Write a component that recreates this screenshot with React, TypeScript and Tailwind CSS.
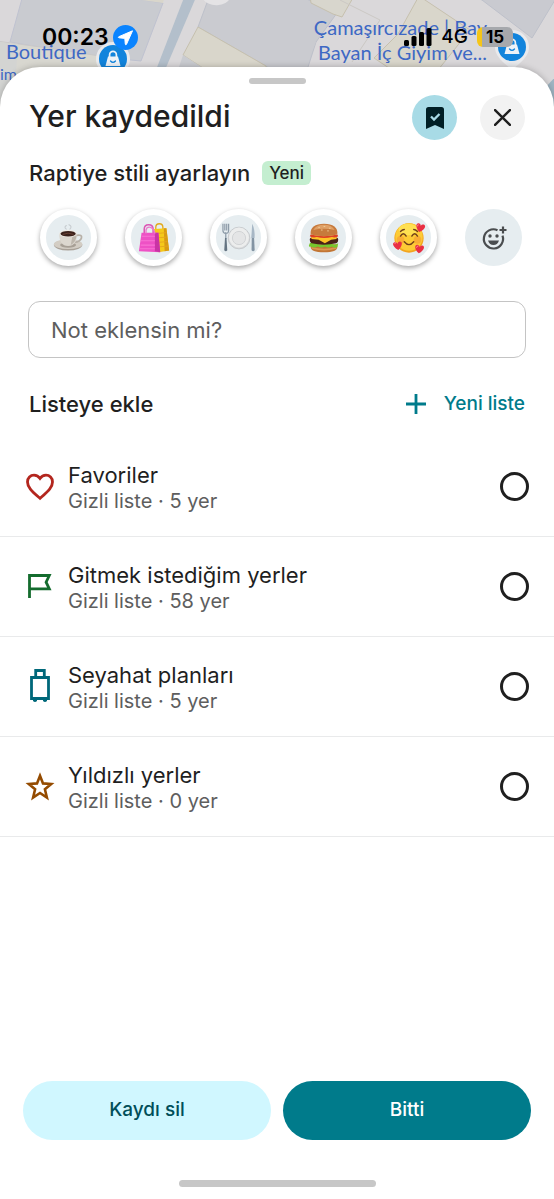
import { useState, type ReactNode } from "react";

const ui = "font-['Inter','Liberation_Sans',sans-serif]";

function BagPin({ cx, cy }: { cx: number; cy: number }) {
  return (
    <g transform={`translate(${cx} ${cy})`}>
      <path d="M-17 0a17 17 0 1 1 34 0c0 7-4 11-9 16l-8 7-8-7c-5-5-9-9-9-16z" fill="#e9eaed" />
      <circle r="14" fill="#1284dc" />
      <path d="M-5-2.500H5L7.500 7h-15z" fill="#eef2f7" />
      <path d="M-3.400-2v-2.300a3.400 3.400 0 0 1 6.800 0V-2" fill="none" stroke="#eef2f7" strokeWidth="1.700" />
      <path d="M-2.500 2q2.500 2.600 5 0" fill="none" stroke="#1284dc" strokeWidth="1.300" strokeLinecap="round" />
    </g>
  );
}

function MapBackdrop() {
  return (
    <div className="absolute inset-x-0 top-0 h-32 overflow-hidden bg-[#dad8da]">
      <svg className="h-full w-full" viewBox="0 0 554 128" preserveAspectRatio="xMidYMin slice" aria-hidden="true">
        <path d="M23-5H112L163 3 141 61 90 56 10 42z" fill="#c9cbd0" stroke="#bfc2d0" />
        <path d="M-4 41 48 48 100 56 98 80-4 128z" fill="#d8d7d0" stroke="#c9c8c8" />
        <path d="M0 42 18 44 14 100-4 106z" fill="#d3d4d2" />
        <path d="M112-4 163 3 165-5z" fill="#d9d6cb" />
        <path d="M185-5h12L165 70h-9z" fill="#b3bfcb" />
        <path d="M208 0 300-4 337 13 316 42 300 92 266 66 198 27z" fill="#cacbd0" stroke="#bdc0ca" />
        <path d="M198 27 266 66v4h-60L183 55z" fill="#d9d6cb" stroke="#c6c0ae" />
        <path d="M183 55 206 70H178z" fill="#c9cbd0" />
        <path d="M310-4h44l-12 21-9-3-22-11z" fill="#d8d6cd" stroke="#c6c0ae" />
        <path d="M274 10 316 42 304 70H274z" fill="#cacbd0" />
        <path d="M419-4 470 30 438 70H392l-18-12 24-24z" fill="#d9d6cb" stroke="#c6c0ae" />
        <path d="M470-5H558L532 38 482 0z" fill="#c9cad0" stroke="#bdc0ca" />
        <path d="M340 0 380 20 352 62" fill="none" stroke="#cbc8c4" />
        <path d="M558 74 532 102 554 126z" fill="#9fb5c3" />
        <path d="M202-4h28v2a14 9 0 0 1-27 1z" fill="#e4e3e5" />
        <BagPin cx={113} cy={59} />
        <BagPin cx={512} cy={47} />
      </svg>
      <div className="absolute left-[6px] top-[39px] font-['Lato','Inter',sans-serif] text-xl leading-6 text-[#3e68c4]">Boutique</div>
      <div className="absolute left-0 top-16 font-['Lato','Inter',sans-serif] text-base leading-5 text-[#3e68c4]">im</div>
      <div className="absolute right-[67px] top-[15px] text-right font-['Lato','Inter',sans-serif] text-xl leading-[25px] text-[#3e68c4]">
        Çamaşırcızade | Bay
        <br />
        Bayan İç Giyim ve...
      </div>
    </div>
  );
}

function StatusBar() {
  return (
    <div className="relative flex h-[67px] items-center pl-[42px] pr-[41px] pt-[7px] text-black">
      <span className="text-[23px] font-semibold leading-6">00:23</span>
      <svg className="ml-1 size-[25px]" viewBox="0 0 25 25" aria-hidden="true">
        <circle cx="12.500" cy="12.500" r="12.500" fill="#0a84ff" />
        <path d="M19.500 5.800 5.800 11.700q-1.100.7.300 1.100l5.700.6.500 5.800q.5 1.300 1.200.1z" fill="#fff" stroke="#fff" strokeLinejoin="round" />
      </svg>
      <svg className="ml-auto h-[18px] w-[28px]" viewBox="0 0 28 18" aria-hidden="true">
        <rect x="0" y="12" width="5" height="6" rx="1.500" />
        <rect x="7.500" y="8" width="5" height="10" rx="1.500" />
        <rect x="15" y="4" width="5" height="14" rx="1.500" />
        <rect x="22.500" y="0" width="5" height="18" rx="1.500" />
      </svg>
      <span className="ml-[9px] text-[19px] font-medium leading-6">4G</span>
      <span className="ml-[9px] flex h-5 w-9 items-center justify-center rounded-md bg-linear-to-r from-[#f5c518] from-15% to-[#a6a8ac] to-15% text-[17px] font-bold leading-5">
        15
      </span>
    </div>
  );
}

function Coffee() {
  return (
    <svg className="size-8" viewBox="0 0 36 36" aria-hidden="true">
      <path d="M15 8q-3-2 0-4M19 8q3-3-1-5" fill="none" stroke="#c7ccd0" strokeWidth="1.200" strokeLinecap="round" />
      <ellipse cx="17" cy="26" rx="16" ry="6" fill="#a9a198" />
      <ellipse cx="17" cy="25" rx="16" ry="5.500" fill="#d3cdc4" />
      <ellipse cx="17" cy="26" rx="9" ry="3" fill="#a79f95" />
      <path d="M27 15q6-1 5 3t-8 5" fill="none" stroke="#b7b0a7" strokeWidth="2" />
      <path d="M7 13c0 9 3 14 10 14s10-5 10-14z" fill="#dcd7cf" />
      <path d="M20 26c5-3 6-7 7-13l-5 2z" fill="#bdb6ac" />
      <ellipse cx="17" cy="13" rx="10" ry="4.200" fill="#eeeae4" />
      <ellipse cx="17" cy="13.200" rx="8.600" ry="3.100" fill="#3b211b" />
      <path d="M11 14q6-3 12 0" fill="none" stroke="#6d4436" />
    </svg>
  );
}

function Bags() {
  return (
    <svg className="size-8" viewBox="0 0 36 36" aria-hidden="true">
      <path d="M20 9V6q0-4 4-4t4 4v4" fill="none" stroke="#e2a91c" strokeWidth="1.500" />
      <path d="m18 8 14-1 3 25-12 2z" fill="#f5c918" />
      <path d="m29 7 3 0 3 25-5 1z" fill="#d89a13" />
      <path d="m20 13 12-1M20 18l12-1M22 23l11-1M23 28l11-1" stroke="#e6a51b" />
      <path d="M7 13V8q0-5 5-5t5 5v5" fill="none" stroke="#dc56b4" strokeWidth="1.700" />
      <path d="M4 12h19l2 22-24-1z" fill="#ee51c5" />
      <path d="m19 12 4 0 2 22-6-1z" fill="#c934a4" />
      <path d="M4 16h15M3 21h16M3 26h16M2 30h17" stroke="#f773d3" strokeWidth="1.200" />
      <path d="M9 13V9q1-4 5-3t5 7" fill="none" stroke="#ed77cb" strokeWidth="1.500" />
    </svg>
  );
}

function Dining() {
  return (
    <svg className="size-[34px]" viewBox="0 0 36 36" aria-hidden="true">
      <circle cx="18" cy="18" r="11.500" fill="#d8dadc" stroke="#c6c9cc" />
      <circle cx="18" cy="17.500" r="10.500" fill="#eceded" />
      <circle cx="18" cy="18" r="7" fill="#e4e5e6" stroke="#cfd1d3" />
      <path d="M1 3v7q0 3 3 3t3-3V3M3 3v7M5 3v7M4 12v7" fill="none" stroke="#8d9ba8" strokeWidth="1.300" />
      <path d="m3.200 18h1.600l.8 13q-1.600 2-3.200 0z" fill="#647482" />
      <path d="M32 3q3 6 2.500 15H31z" fill="#a7b7c5" />
      <path d="M31.500 18h2.500l.6 13q-1.700 2-3.300 0z" fill="#8394a3" />
    </svg>
  );
}

function Burger() {
  return (
    <svg className="size-8" viewBox="0 0 36 36" aria-hidden="true">
      <path d="M3 25h30v3q0 6-15 6T3 28z" fill="#c27635" />
      <path d="M4 28q14 4 28 0v2q-14 4-28 0z" fill="#dc9750" />
      <path d="M2 24q4-3 8 0t8 0 8 0 8 0l-1 4q-3 2-6-.5-4 2.500-8 0-4 2.500-8 0-4 2.500-8 0-2 1-2-1z" fill="#76c72d" />
      <path d="M2 20q0-3 4-3h24q4 0 4 3t-2 4q-14 3-28 0-2-1-2-4z" fill="#4a2118" />
      <path d="M3 15h30l-1 4-6 1-7 4-7-4-8-1z" fill="#fec326" />
      <path d="M3 14q15 4 30 0l1 2q-3 2-7 1-9 2-17 0-5 1-8-1z" fill="#dc3f26" />
      <path d="M3 14C2 6 8 2 18 2s16 4 15 12q-15 4-30 0z" fill="#c77a3c" />
      <path d="M6 9q3-6 12-6t12 6q-12-3-24 0z" fill="#dfa066" />
      <path d="M12 6h1m5-1h1m5 2h1m-10 2h1m6 1h1" stroke="#f1cf9b" strokeLinecap="round" />
    </svg>
  );
}

function SmilingHearts() {
  const heart = "M0 4.800C-6 .5-5.500-4-2.600-4Q-.6-4 0-2 .6-4 2.600-4C5.500-4 6 .5 0 4.800z";
  return (
    <svg className="size-[34px]" viewBox="0 0 36 36" aria-hidden="true">
      <circle cx="18" cy="18" r="15.500" fill="#f3a51f" />
      <circle cx="18" cy="17" r="14.500" fill="#fdcb35" />
      <ellipse cx="17" cy="9" rx="10" ry="6" fill="#ffe051" />
      <circle cx="9" cy="20" r="4" fill="#f79a36" opacity=".6" />
      <circle cx="27" cy="20" r="4" fill="#f79a36" opacity=".6" />
      <path d="M9 16q3-5 6 0M21 16q3-5 6 0M13 22q5 6 10 0M9 11q2-2 4-2M23 9q2 0 4 2" fill="none" stroke="#71401b" strokeWidth="1.500" strokeLinecap="round" />
      <g fill="#e92f43">
        <path d={heart} transform="translate(30 7) rotate(14)" />
        <path d={heart} transform="translate(6 26) rotate(-8)" />
        <path d={heart} transform="translate(29 29.500) rotate(8)" />
      </g>
      <path d="M26.500 5.500q0-1.500 1.500-1.500M3 24q0-1.500 1.500-1.500M26 28q0-1.500 1.500-1.500" fill="none" stroke="#ff8590" strokeLinecap="round" />
    </svg>
  );
}

const pinStyles: { name: string; art: ReactNode }[] = [
  { name: "Kahve", art: <Coffee /> },
  { name: "Alışveriş", art: <Bags /> },
  { name: "Yemek", art: <Dining /> },
  { name: "Hamburger", art: <Burger /> },
  { name: "Gülen yüz", art: <SmilingHearts /> },
];

const lists: { id: string; name: string; count: number; icon: ReactNode }[] = [
  {
    id: "favoriler",
    name: "Favoriler",
    count: 5,
    icon: (
      <path
        d="M16 27.300 14.500 26C7.500 19.800 3.500 16 3.500 10.900 3.500 7 6.500 4.200 10 4.200c2.400 0 4.600 1.200 6 3.200 1.400-2 3.600-3.200 6-3.200 3.500 0 6.500 2.800 6.500 6.700 0 5.100-4 8.900-11 15.100z"
        stroke="#b3261e"
      />
    ),
  },
  {
    id: "gitmek",
    name: "Gitmek istediğim yerler",
    count: 58,
    icon: <path d="M5.500 27V4.500h19.800l-3.200 6.700 3.200 6.700H5.500" stroke="#146c2e" />,
  },
  {
    id: "seyahat",
    name: "Seyahat planları",
    count: 5,
    icon: (
      <>
        <path d="M7.500 6.500h17V27.500h-17zM11.700 6.500V-.5h8.600v7" stroke="#00687a" />
        <path d="M9 28h4v2q-2 2-4 0zm10 0h4v2q-2 2-4 0z" fill="#00687a" />
      </>
    ),
  },
  {
    id: "yildizli",
    name: "Yıldızlı yerler",
    count: 0,
    icon: <path d="m16 4.800 3 7.600 8.200.6-6.300 5.300 2 8.200-6.900-4.500-6.900 4.500 2-8.200L4.800 13l8.200-.6z" stroke="#944b00" strokeWidth="2.600" />,
  },
];

function ListRow({ id, name, count, icon }: (typeof lists)[number]) {
  return (
    <li className="border-b border-[#e9eaeb]">
      <label htmlFor={id} className="flex h-[99px] cursor-pointer items-center pl-6 pr-[25px]">
        <svg className="size-8 shrink-0 overflow-visible" viewBox="0 0 32 32" fill="none" strokeWidth="2.800" aria-hidden="true">
          {icon}
        </svg>
        <span className="ml-3 flex flex-1 flex-col pt-[2px]">
          <span className="text-[22px] leading-[26px] text-[#1f1f1f]">{name}</span>
          <span className="text-xl leading-[26px] text-[#5e5e5e]">Gizli liste · {count} yer</span>
        </span>
        <input
          id={id}
          type="checkbox"
          className="size-[29px] shrink-0 cursor-pointer appearance-none rounded-full border-3 border-[#1f1f1f] checked:bg-[#007b8b]"
        />
      </label>
    </li>
  );
}

export default function App() {
  const [note, setNote] = useState("");
  return (
    <main className={`relative flex min-h-screen flex-col bg-white ${ui}`}>
      <MapBackdrop />
      <StatusBar />
      <section className="relative flex flex-1 flex-col rounded-t-[40px] bg-white shadow-[0_0_6px_rgba(0,0,0,0.25)]">
        <div className="mx-auto mt-[11px] h-[6px] w-[57px] rounded-full bg-[#c7c7c7]" />
        <header className="mt-[11px] flex items-center px-[29px]">
          <h1 className="flex-1 pb-1 text-[30px] font-medium leading-9 text-[#1f1f1f]">Yer kaydedildi</h1>
          <button type="button" aria-label="Kaydedildi" className="grid size-[45px] place-items-center rounded-full bg-[#a8dbe6]">
            <svg className="h-[22px] w-[18px]" viewBox="0 0 18 22" aria-hidden="true">
              <path d="M2.500 0h13Q18 0 18 2.500V22l-9-4-9 4V2.500Q0 0 2.500 0z" fill="#001f25" />
              <path d="m5 9.500 3 3L13.500 7" fill="none" stroke="#a8dbe6" strokeWidth="2.300" />
            </svg>
          </button>
          <button type="button" aria-label="Kapat" className="ml-[23px] grid size-[45px] place-items-center rounded-full bg-[#f2f2f2]">
            <svg className="size-[17px]" viewBox="0 0 16 16" aria-hidden="true">
              <path d="m1 1 14 14M15 1 1 15" stroke="#1f1f1f" strokeWidth="2.300" strokeLinecap="round" />
            </svg>
          </button>
        </header>

        <div className="mt-[21px] flex items-center gap-3 px-[29px]">
          <h2 className="text-[22px] font-medium leading-6 text-[#1f1f1f]">Raptiye stili ayarlayın</h2>
          <span className="rounded-md bg-[#c4eed0] px-[7px] text-[17px] font-medium leading-6 text-[#1f1f1f]">Yeni</span>
        </div>

        <div className="mt-6 flex justify-between pl-10 pr-8">
          {pinStyles.map((pin) => (
            <button
              key={pin.name}
              type="button"
              aria-label={pin.name}
              className="grid size-[57px] place-items-center rounded-full border-6 border-white bg-[#e6edf0] shadow-[0_2px_5px_rgba(0,0,0,0.35)]"
            >
              {pin.art}
            </button>
          ))}
          <button type="button" aria-label="Emoji ekle" className="grid size-[57px] place-items-center rounded-full bg-[#e6edf0]">
            <svg className="size-7" viewBox="0 0 28 28" fill="none" stroke="#4a4d4f" strokeWidth="2.200" aria-hidden="true">
              <path d="M17.500 6.200a9.600 9.600 0 1 0 5 5.500M23 2.500v7M19.500 6h7" />
              <circle cx="10" cy="12" r="1.700" fill="#4a4d4f" stroke="none" />
              <circle cx="17" cy="12" r="1.700" fill="#4a4d4f" stroke="none" />
              <path d="M8 16.500h11q-1.500 4.500-5.500 4.500T8 16.500z" fill="#4a4d4f" stroke="none" />
            </svg>
          </button>
        </div>

        <div className="mt-[35px] px-7">
          <input
            type="text"
            aria-label="Not"
            placeholder="Not eklensin mi?"
            value={note}
            onChange={(event) => setNote(event.target.value)}
            className="h-[57px] w-full rounded-xl border border-[#c4c4c4] px-[22px] text-[22px] text-[#1f1f1f] outline-none placeholder:text-[#5e5e5e]"
          />
        </div>

        <div className="mt-8 flex items-center justify-between px-[29px]">
          <h2 className="text-[22px] font-medium leading-7 text-[#1f1f1f]">Listeye ekle</h2>
          <button type="button" className="flex items-center gap-[18px] text-[19px] font-medium leading-7 text-[#007b8b]">
            <svg className="size-5" viewBox="0 0 20 20" aria-hidden="true">
              <path d="M10 0v20M0 10h20" stroke="currentColor" strokeWidth="2.800" />
            </svg>
            Yeni liste
          </button>
        </div>

        <ul className="mt-[19px]">
          {lists.map((list) => (
            <ListRow key={list.id} {...list} />
          ))}
        </ul>

        <footer className="mt-auto px-[23px] pb-3 pt-6">
          <div className="grid grid-cols-2 gap-3 text-[19px] font-medium">
            <button type="button" className="h-[59px] rounded-full bg-[#d0f7ff] text-[#004e59]">
              Kaydı sil
            </button>
            <button type="button" className="h-[59px] rounded-full bg-[#007b8b] text-white">
              Bitti
            </button>
          </div>
          <div className="mx-auto mt-10 h-[7px] w-[197px] rounded-full bg-[#c7c7c7]" />
        </footer>
      </section>
    </main>
  );
}
